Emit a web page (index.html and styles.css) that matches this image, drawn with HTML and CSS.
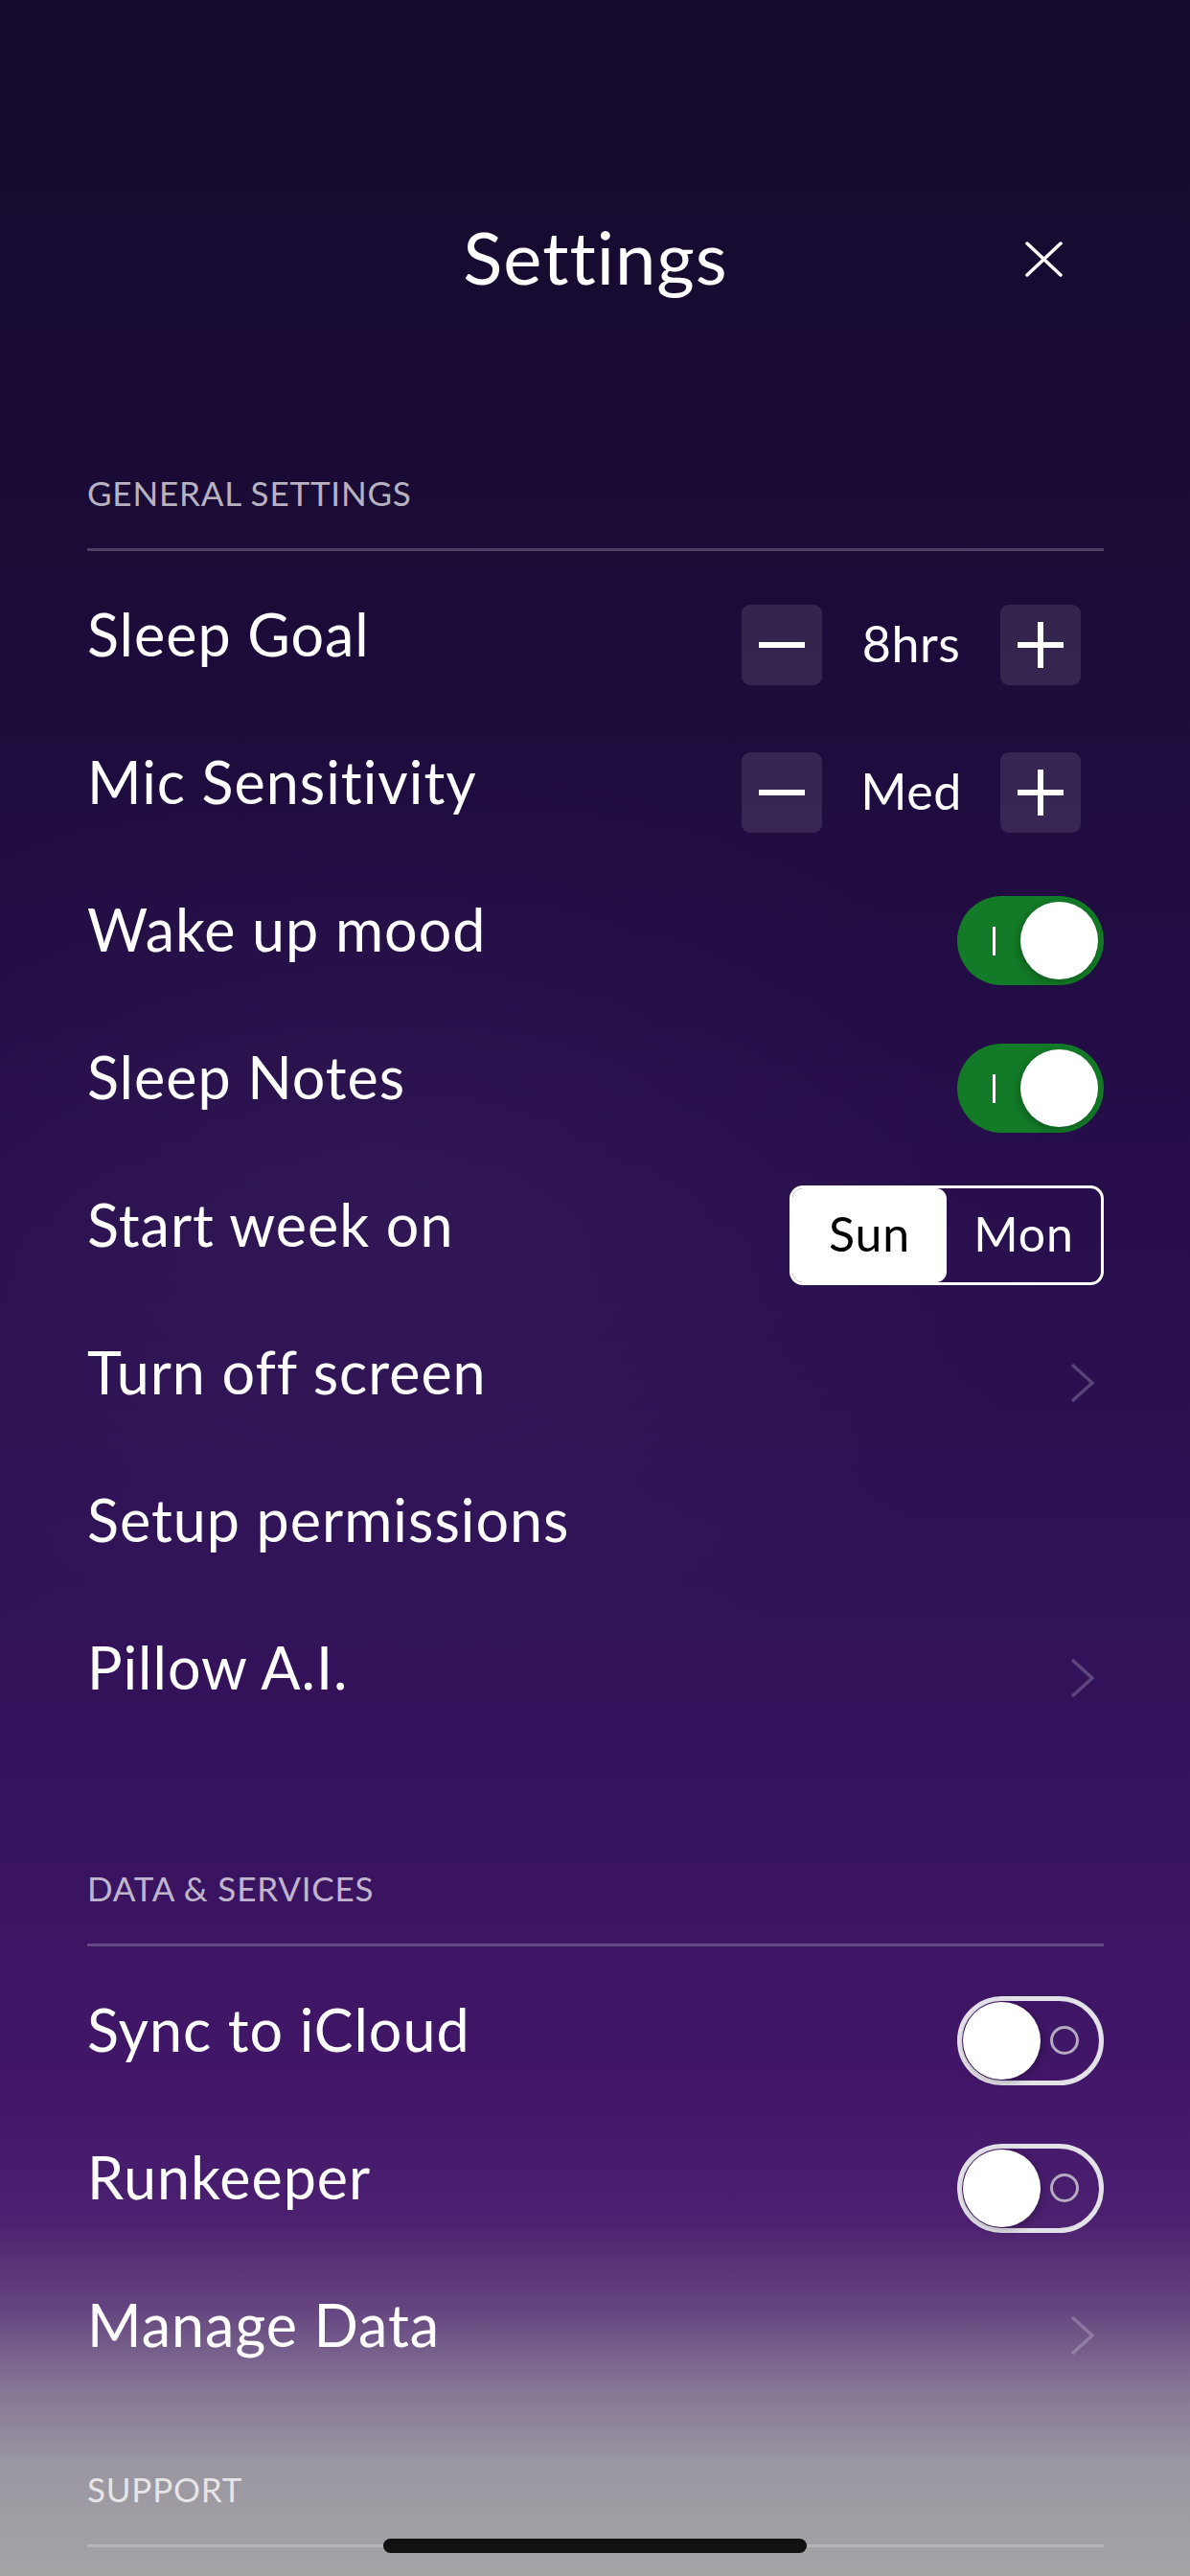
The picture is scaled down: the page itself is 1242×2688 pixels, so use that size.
FILE: index.html
```html
<!DOCTYPE html>
<html lang="en">
<head>
    <meta charset="UTF-8">
    <meta name="viewport" content="width=device-width, initial-scale=1.0">
    <title>Settings</title>
    <link rel="stylesheet" href="styles.css">
</head>
<body>
    <div class="screen">
        <header class="topbar">
            <h1 class="title">Settings</h1>
            <button class="close" type="button" aria-label="Close">
                <svg width="39" height="37" viewBox="0 0 39 37"><path d="M2 2L37 35M37 2L2 35" stroke="#fff" stroke-width="3.5" stroke-linecap="round" fill="none"/></svg>
            </button>
        </header>

        <section class="group group-general">
            <h2 class="group-label">GENERAL SETTINGS</h2>
            <div class="row">
                <span class="row-label">Sleep Goal</span>
                <div class="stepper">
                    <button class="step" type="button"><svg width="48" height="48" viewBox="0 0 48 48"><path d="M0 24H48" stroke="#fff" stroke-width="6"/></svg></button>
                    <span class="step-value">8hrs</span>
                    <button class="step" type="button"><svg width="48" height="48" viewBox="0 0 48 48"><path d="M0 24H48M24 0V48" stroke="#fff" stroke-width="6"/></svg></button>
                </div>
            </div>
            <div class="row">
                <span class="row-label">Mic Sensitivity</span>
                <div class="stepper">
                    <button class="step" type="button"><svg width="48" height="48" viewBox="0 0 48 48"><path d="M0 24H48" stroke="#fff" stroke-width="6"/></svg></button>
                    <span class="step-value">Med</span>
                    <button class="step" type="button"><svg width="48" height="48" viewBox="0 0 48 48"><path d="M0 24H48M24 0V48" stroke="#fff" stroke-width="6"/></svg></button>
                </div>
            </div>
            <div class="row">
                <span class="row-label">Wake up mood</span>
                <div class="switch on"><span class="switch-mark"></span><span class="knob"></span></div>
            </div>
            <div class="row">
                <span class="row-label">Sleep Notes</span>
                <div class="switch on"><span class="switch-mark"></span><span class="knob"></span></div>
            </div>
            <div class="row">
                <span class="row-label">Start week on</span>
                <div class="segment">
                    <span class="seg active">Sun</span>
                    <span class="seg">Mon</span>
                </div>
            </div>
            <div class="row">
                <span class="row-label">Turn off screen</span>
                <svg class="chevron" width="25" height="42" viewBox="0 0 25 42"><path d="M2 2L23 21L2 40" stroke="currentColor" stroke-width="3.5" fill="none"/></svg>
            </div>
            <div class="row">
                <span class="row-label">Setup permissions</span>
            </div>
            <div class="row">
                <span class="row-label">Pillow A.I.</span>
                <svg class="chevron" width="25" height="42" viewBox="0 0 25 42"><path d="M2 2L23 21L2 40" stroke="currentColor" stroke-width="3.5" fill="none"/></svg>
            </div>
        </section>

        <section class="group group-data">
            <h2 class="group-label">DATA &amp; SERVICES</h2>
            <div class="row">
                <span class="row-label">Sync to iCloud</span>
                <div class="switch off"><span class="knob"></span><span class="switch-ring"></span></div>
            </div>
            <div class="row">
                <span class="row-label">Runkeeper</span>
                <div class="switch off"><span class="knob"></span><span class="switch-ring"></span></div>
            </div>
            <div class="row">
                <span class="row-label">Manage Data</span>
                <svg class="chevron" width="25" height="42" viewBox="0 0 25 42"><path d="M2 2L23 21L2 40" stroke="currentColor" stroke-width="3.5" fill="none"/></svg>
            </div>
        </section>

        <section class="group group-support">
            <h2 class="group-label">SUPPORT</h2>
        </section>

        <div class="home-bar"></div>
    </div>
</body>
</html>
```

FILE: styles.css
```css
body {
    margin: 0;
    padding: 0;
    font-family: 'Lato', 'Open Sans', sans-serif;
    font-weight: 400;
    color: #fff;
    background-color: #140a2b;
}
.screen {
    position: relative;
    width: 1242px;
    height: 2688px;
    overflow: hidden;
    box-sizing: border-box;
    padding: 0 90px 0 91px;
    background:
        radial-gradient(ellipse 700px 500px at 400px 1280px, rgba(90, 60, 130, 0.18), transparent),
        linear-gradient(180deg,
            #140a2b 0px,
            #1b0b38 600px,
            #240d47 1100px,
            #2c1052 1500px,
            #37135e 1900px,
            #43176a 2200px,
            #4d2170 2320px,
            #654580 2410px,
            #857595 2490px,
            #9a96a1 2570px,
            #a5a4a7 2688px);
}
.topbar {
    display: grid;
    grid-template-columns: 1fr auto 1fr;
    align-items: center;
    padding-top: 222px;
    height: 91px;
}
.title {
    grid-column: 2;
    margin: 0;
    font-size: 76px;
    font-weight: 400;
    letter-spacing: 1px;
    line-height: 91px;
}
.close {
    grid-column: 3;
    justify-self: end;
    margin-right: 43px;
    margin-top: 6px;
    padding: 0;
    border: none;
    background: none;
    width: 39px;
    height: 37px;
    display: flex;
}
.group-label {
    margin: 0 0 21px;
    padding-bottom: 38px;
    border-bottom: 3px solid rgba(255, 255, 255, 0.22);
    font-size: 35px;
    font-weight: 400;
    letter-spacing: 0.8px;
    line-height: 40px;
    color: rgba(255, 255, 255, 0.7);
}
.group-general {
    margin-top: 181px;
}
.group-data {
    margin-top: 122px;
}
.group-support {
    margin-top: 63px;
}
.group-support .group-label {
    color: rgba(255, 255, 255, 0.75);
}
.row {
    height: 154px;
    display: flex;
    align-items: center;
    justify-content: space-between;
}
.row-label {
    font-size: 61px;
    letter-spacing: 1px;
    line-height: 73px;
    padding-bottom: 23px;
}
.stepper {
    display: flex;
    align-items: center;
    margin-right: 24px;
}
.step {
    width: 84px;
    height: 84px;
    border: none;
    border-radius: 9px;
    background-color: rgba(255, 255, 255, 0.11);
    padding: 0;
    display: flex;
    align-items: center;
    justify-content: center;
}
.step-value {
    width: 186px;
    text-align: center;
    font-size: 52px;
    letter-spacing: 0.5px;
    line-height: 62px;
    padding-bottom: 5px;
}
.switch {
    position: relative;
    width: 153px;
    height: 93px;
    border-radius: 47px;
    box-sizing: border-box;
    flex-shrink: 0;
}
.switch.on {
    background-color: #137a27;
}
.switch.off {
    border: 5px solid #e4e2e9;
}
.knob {
    position: absolute;
    width: 81px;
    height: 81px;
    border-radius: 50%;
    background-color: #fff;
    box-shadow: -2px 3px 8px rgba(0, 0, 0, 0.25);
}
.switch.on .knob {
    top: 6px;
    right: 6px;
}
.switch.off .knob {
    top: 1px;
    left: 1px;
    box-shadow: 2px 3px 8px rgba(0, 0, 0, 0.25);
}
.switch-mark {
    position: absolute;
    left: 37px;
    top: 32px;
    width: 3px;
    height: 30px;
    background-color: #fff;
}
.switch-ring {
    position: absolute;
    left: 92px;
    top: 26px;
    width: 30px;
    height: 30px;
    box-sizing: border-box;
    border: 3px solid #b4abc1;
    border-radius: 50%;
}
.segment {
    display: flex;
    width: 328px;
    height: 104px;
    box-sizing: border-box;
    border: 3px solid #fff;
    border-radius: 14px;
    overflow: hidden;
}
.seg {
    flex: 1;
    display: flex;
    align-items: center;
    justify-content: center;
    font-size: 50px;
    letter-spacing: 0.8px;
    line-height: 60px;
    padding-bottom: 4px;
}
.seg.active {
    background-color: #fff;
    color: #000;
    border-radius: 0 11px 11px 0;
}
.chevron {
    margin-right: 10px;
    color: rgba(255, 255, 255, 0.22);
}
.home-bar {
    position: absolute;
    left: 400px;
    top: 2649px;
    width: 442px;
    height: 15px;
    border-radius: 8px;
    background-color: #111;
}
```
